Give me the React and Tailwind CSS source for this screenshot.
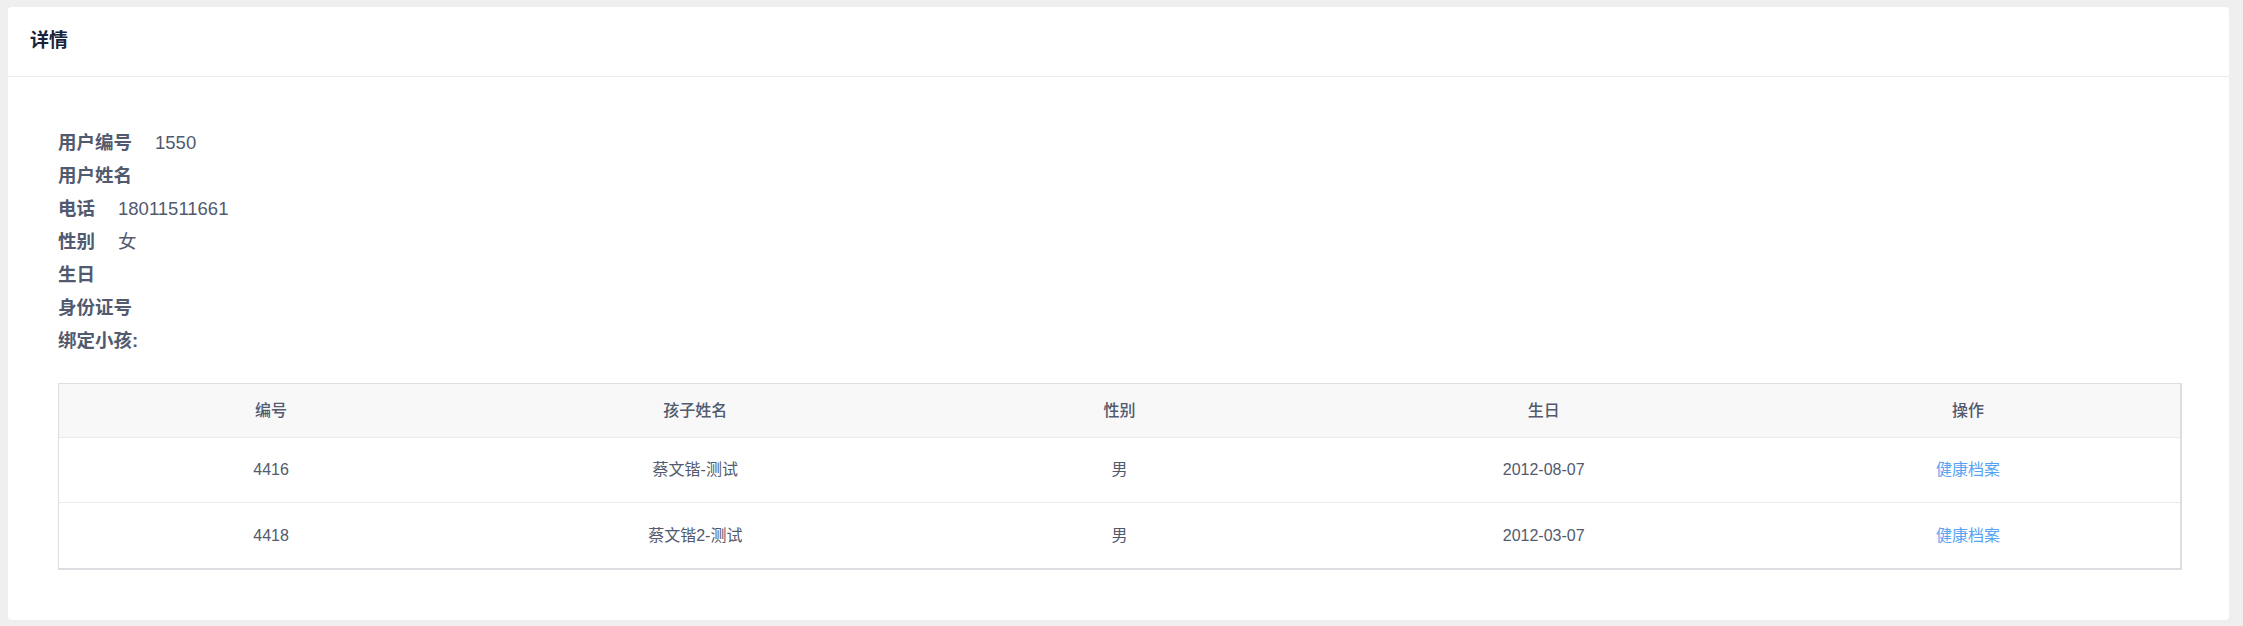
import React from 'react'

const info = [
    { label: '用户编号', value: '1550' },
    { label: '用户姓名', value: '' },
    { label: '电话', value: '18011511661' },
    { label: '性别', value: '女' },
    { label: '生日', value: '' },
    { label: '身份证号', value: '' },
    { label: '绑定小孩:', value: '' },
]

const children = [
    { id: '4416', name: '蔡文锴-测试', sex: '男', birthday: '2012-08-07' },
    { id: '4418', name: '蔡文锴2-测试', sex: '男', birthday: '2012-03-07' },
]

const columns = ['编号', '孩子姓名', '性别', '生日', '操作']

const App = () => {
    return (
        <div
            className="min-h-[626px] bg-[#efefef] pl-2 pr-[14px] pt-[7px] pb-2"
            style={{ fontFamily: '"Liberation Sans", "Noto Sans CJK SC", sans-serif' }}
        >
            <div className="bg-white rounded-[4px]">
                {/* header */}
                <div className="h-[70px] flex items-center pl-[22px] border-b border-[#e8eaec]">
                    <h1 className="text-[19px] font-bold text-[#17233d]">详情</h1>
                </div>

                {/* body */}
                <div className="pt-[49px] pl-[50px] pr-[47px] pb-[50px]">
                    <div className="flex flex-col">
                        {info.map((row) => (
                            <div key={row.label} className="h-[33px] flex items-center text-[18.5px] text-[#515a6e]">
                                <span className="font-bold">{row.label}</span>
                                {row.value && <span className="ml-[23px]">{row.value}</span>}
                            </div>
                        ))}
                    </div>

                    <div className="mt-[26px] border-t border-l border-r-2 border-b-2 border-t-[#dcdee2] border-l-[#dcdee2] border-r-[#dcdee2] border-b-[#dcdee2]">
                        <div className="grid grid-cols-5 h-[54px] bg-[#f8f8f9] border-b border-[#e8eaec]">
                            {columns.map((c) => (
                                <div key={c} className="flex items-center justify-center text-[16px] font-medium text-[#515a6e]">
                                    {c}
                                </div>
                            ))}
                        </div>
                        {children.map((child, i) => (
                            <div
                                key={child.id}
                                className={`grid grid-cols-5 h-[65px] text-[16px] text-[#515a6e] ${i < children.length - 1 ? 'border-b border-[#e8eaec]' : ''}`}
                            >
                                <div className="flex items-center justify-center">{child.id}</div>
                                <div className="flex items-center justify-center">{child.name}</div>
                                <div className="flex items-center justify-center">{child.sex}</div>
                                <div className="flex items-center justify-center">{child.birthday}</div>
                                <div className="flex items-center justify-center">
                                    <a href="#" className="text-[#57a3f3]">健康档案</a>
                                </div>
                            </div>
                        ))}
                    </div>
                </div>
            </div>
        </div>
    )
}

export default App
